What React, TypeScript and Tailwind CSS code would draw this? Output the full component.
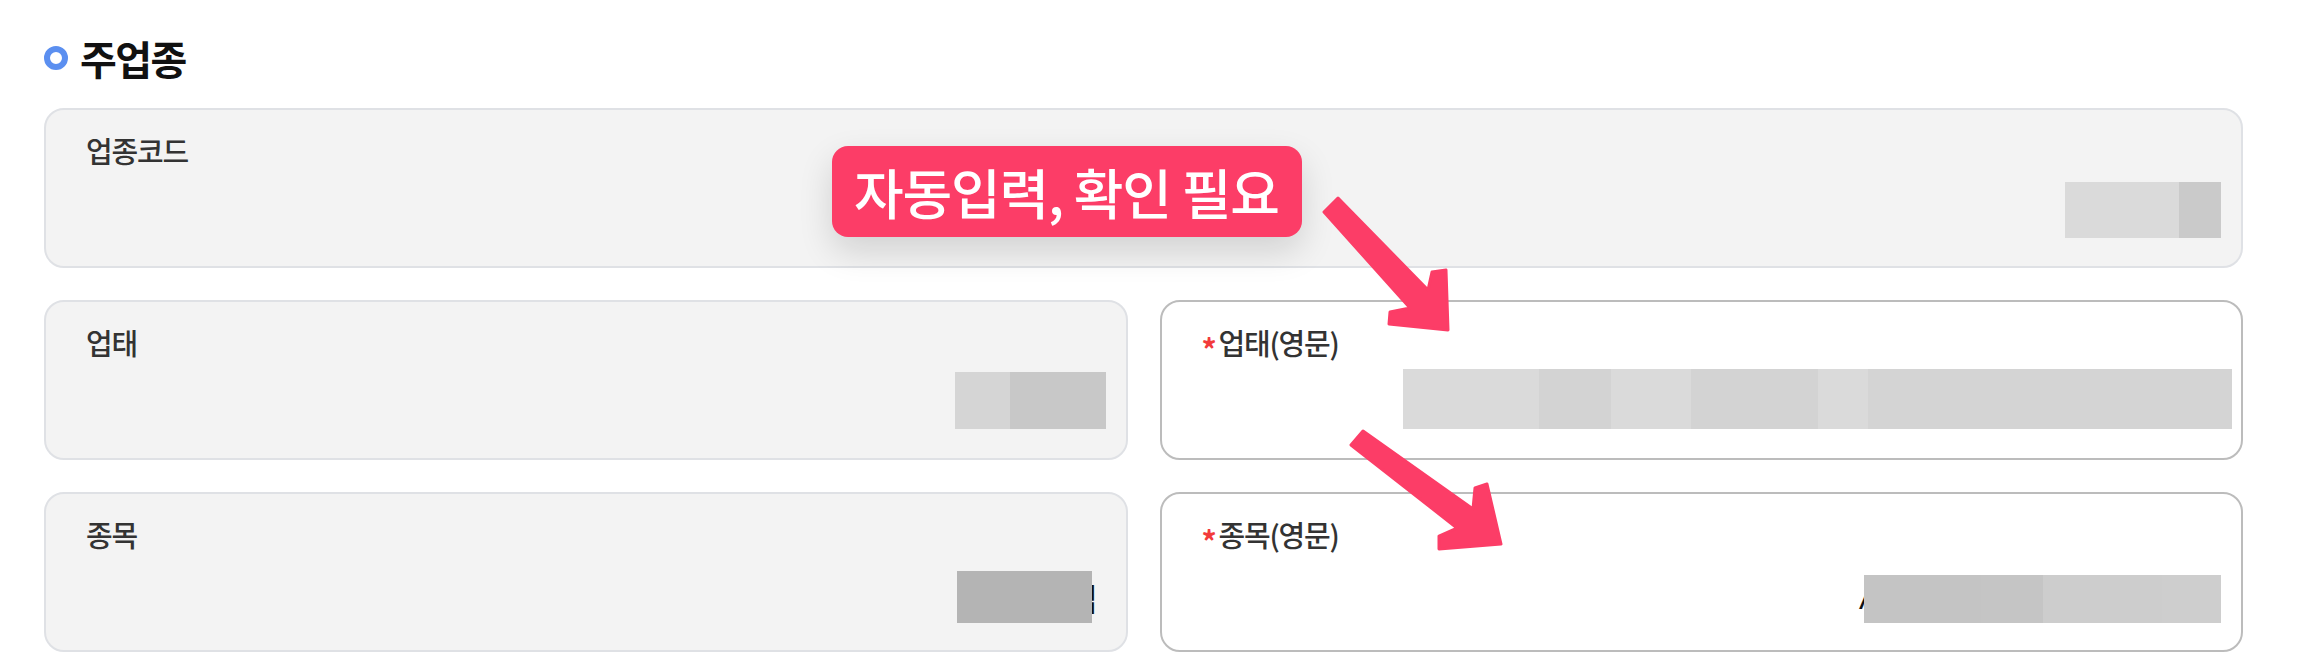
import type { ReactNode } from 'react'

interface FieldCardProps {
  label: string
  required?: boolean
  editable?: boolean
  valueClass: string
  children: ReactNode
}

function FieldCard({ label, required, editable, valueClass, children }: FieldCardProps) {
  const box = editable
    ? 'border-[#bcbcbc] bg-white'
    : 'border-[#dfe1e5] bg-[#f3f3f3]'
  return (
    <div className={`flex h-[160px] flex-col rounded-[20px] border-2 ${box}`}>
      <div className="flex items-center pl-[40px] pt-[20px] text-[29px] font-medium leading-[40px] tracking-[-1.2px] text-[#333]">
        {required && (
          <span className="mr-[3px] translate-y-[6px] text-[30px] font-bold leading-none text-[#f23b3b]">*</span>
        )}
        {label}
      </div>
      <div className={`mt-auto flex justify-end ${valueClass}`}>{children}</div>
    </div>
  )
}

export default function App() {
  return (
    <div className="relative h-[670px] w-[2318px] overflow-hidden bg-white pl-[44px] pt-[34px] font-['Noto_Sans_CJK_KR','Noto_Sans',sans-serif]">
      {/* Section title */}
      <div className="flex h-[48px] items-center gap-[12px]">
        <span className="h-[24px] w-[24px] rounded-full border-[6.5px] border-[#5b8ff0]" />
        <h2 className="text-[40px] font-bold leading-none tracking-[-1.5px] text-[#111]">주업종</h2>
      </div>

      <div className="mt-[26px] flex w-[2199px] flex-col gap-[32px]">
        <FieldCard label="업종코드" valueClass="pb-[28px] pr-[20px]">
          <div className="flex h-[56px]">
            <div className="w-[114px] bg-[#dadada]" />
            <div className="w-[42px] bg-[#cacaca]" />
          </div>
        </FieldCard>

        <div className="grid grid-cols-2 gap-x-[32px] gap-y-[32px]">
          <FieldCard label="업태" valueClass="pb-[29px] pr-[20px]">
            <div className="flex h-[57px]">
              <div className="w-[55px] bg-[#d5d5d5]" />
              <div className="w-[96px] bg-[#c8c8c8]" />
            </div>
          </FieldCard>

          <FieldCard label="업태(영문)" required editable valueClass="pb-[29px] pr-[9px]">
            <div className="flex h-[60px]">
              <div className="w-[136px] bg-[#dadada]" />
              <div className="w-[72px] bg-[#d3d3d3]" />
              <div className="w-[80px] bg-[#dadada]" />
              <div className="w-[127px] bg-[#d3d3d3]" />
              <div className="w-[50px] bg-[#dadada]" />
              <div className="w-[364px] bg-[#d4d4d4]" />
            </div>
          </FieldCard>

          <FieldCard label="종목" valueClass="pb-[27px] pr-[28px]">
            <div className="relative flex h-[52px] w-[141px] items-center justify-end">
              <span className="text-[31px] font-medium leading-none text-[#111]">업</span>
              <div className="absolute left-0 top-0 h-[52px] w-[135px] bg-[#b4b4b4]" />
            </div>
          </FieldCard>

          <FieldCard label="종목(영문)" required editable valueClass="pb-[27px] pr-[20px]">
            <div className="relative flex h-[48px] w-[362px] items-start">
              <span className="font-['Liberation_Sans',sans-serif] text-[30px] leading-[48px] text-[#111]">A</span>
              <div className="absolute right-0 top-0 flex h-[48px]">
                <div className="w-[117px] bg-[#c4c4c4]" />
                <div className="w-[62px] bg-[#c5c5c5]" />
                <div className="w-[119px] bg-[#cdcdcd]" />
                <div className="w-[59px] bg-[#cecece]" />
              </div>
            </div>
          </FieldCard>
        </div>
      </div>

      {/* Annotation badge */}
      <div className="absolute left-[832px] top-[146px] flex h-[91px] w-[470px] items-center rounded-[16px] bg-[#fc3d67] pl-[22px] shadow-[0_14px_34px_rgba(0,0,0,0.14)]">
        <span className="whitespace-nowrap text-[54px] font-medium leading-none tracking-[-1.2px] text-white">
          자동입력, 확인 필요
        </span>
      </div>

      {/* Annotation arrows */}
      <svg
        className="pointer-events-none absolute left-0 top-0 h-[670px] w-[2318px]"
        viewBox="0 0 2318 670"
      >
        <polygon
          points="1338,198 1428,290 1432,272 1446,270 1448,330 1389,324 1390,312 1410,308 1324,212"
          fill="#fc3d67"
          stroke="#fc3d67"
          strokeWidth="3"
          strokeLinejoin="round"
        />
        <polygon
          points="1363,431 1473,509 1475,488 1487,484 1501,544 1439,549 1439,536 1457,528 1351,445"
          fill="#fc3d67"
          stroke="#fc3d67"
          strokeWidth="3"
          strokeLinejoin="round"
        />
      </svg>
    </div>
  )
}
